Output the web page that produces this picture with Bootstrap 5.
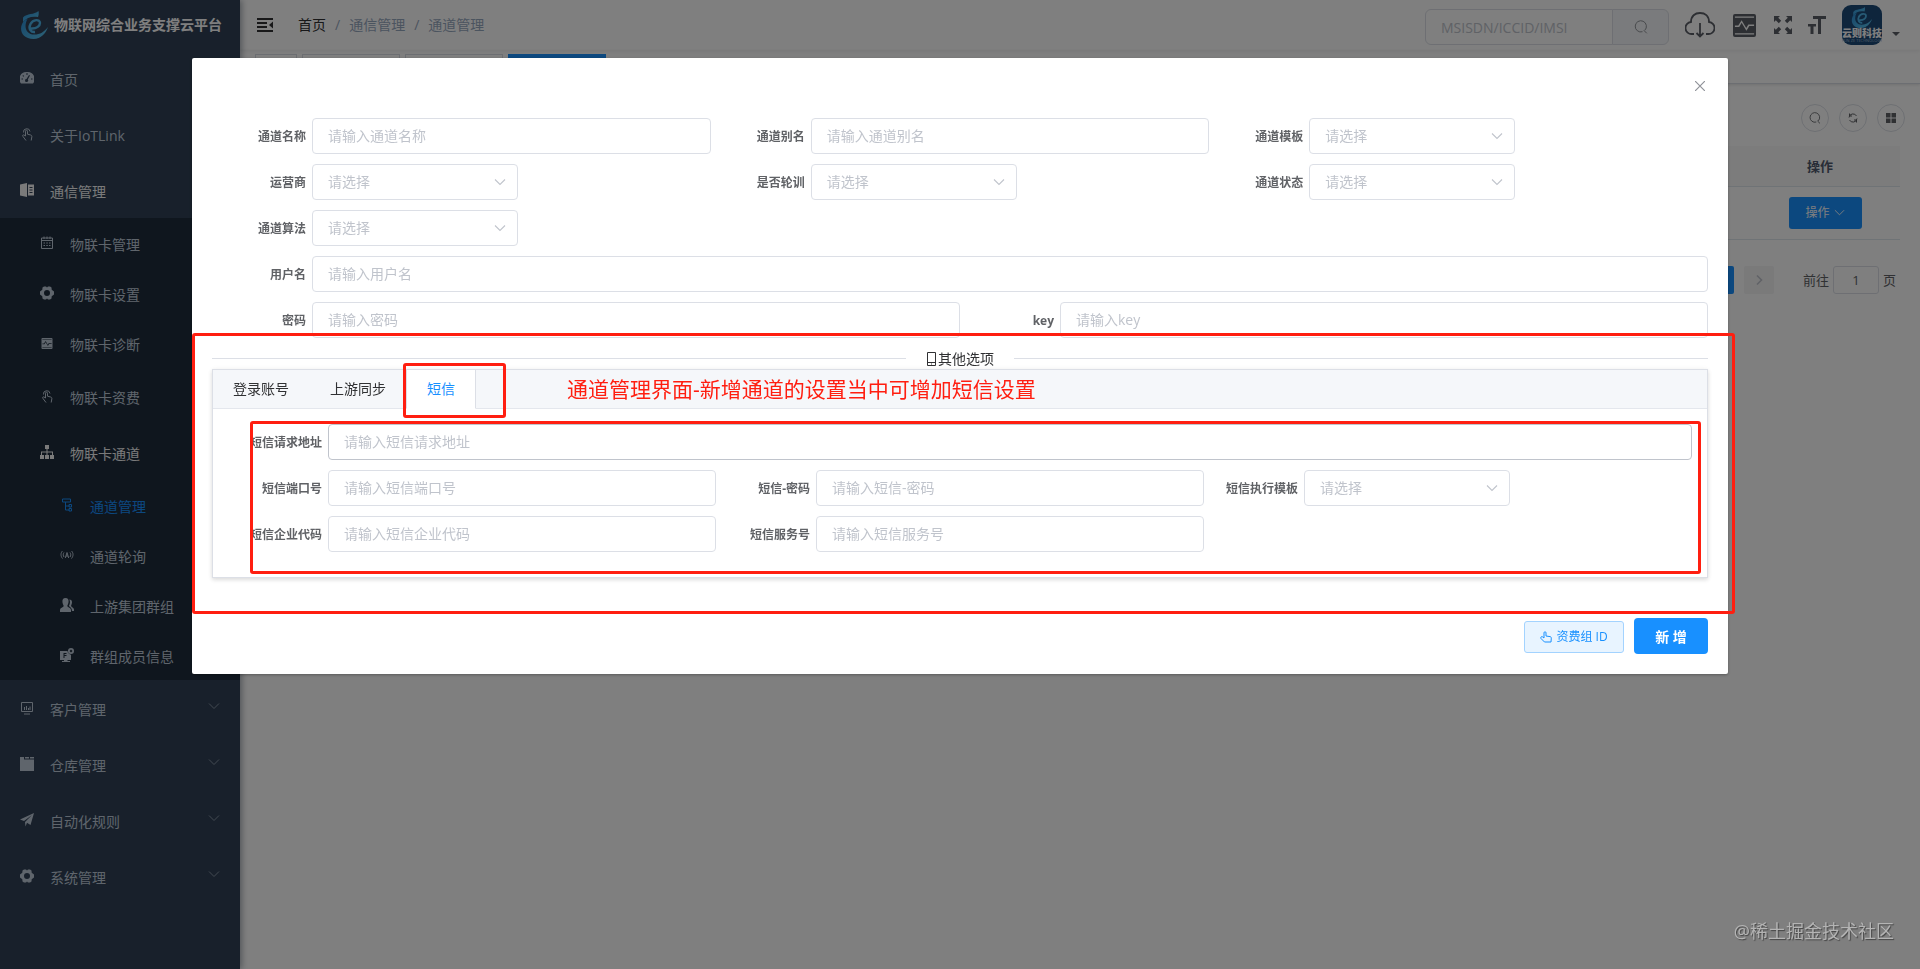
<!DOCTYPE html>
<html lang="zh-CN">
<head>
<meta charset="utf-8">
<meta name="viewport" content="width=device-width, initial-scale=1">
<title>物联网综合业务支撑云平台</title>
<link href="https://cdn.jsdelivr.net/npm/bootstrap@5.3.0/dist/css/bootstrap.min.css" rel="stylesheet">
<style>
:root { --blue: #1890ff; --line: #dcdfe6; --note: #ff1e10; }
body { font-family: "Open Sans", "Noto Sans CJK SC", sans-serif; font-size: 14px; line-height: 20px; color: #303133; background: #fff; }
svg { display: block; fill: none; stroke: currentColor; flex: none; }
svg.solid { fill: currentColor; stroke: none; }
a { color: inherit; text-decoration: none; }

/* side bar */
.side { width: 240px; background: #304156; color: #bfcbd9; box-shadow: 2px 0 6px rgba(0,21,41,.35); z-index: 2; }
.brand { height: 50px; padding-left: 20px; gap: 6px; color: #fff; font-weight: 700; }
.menu a { display: flex; align-items: center; height: 50px; gap: 16px; padding: 0 20px; }
.menu .tall { height: 56px; }
.menu span { padding-top: 3px; }
.menu .sub { background: #1f2d3d; }
.menu .sub a { padding-left: 40px; }
.menu .sub .deep { padding-left: 60px; }
.menu .opened { color: #f4f4f5; }
.menu .current { color: var(--blue); }
.menu .arrow { margin-left: auto; margin-bottom: 4px; opacity: .6; }

/* top bar */
.topbar { height: 50px; box-shadow: 0 1px 4px rgba(0,21,41,.08); padding: 0 18px 0 17px; }
.topbar .tools { color: #5a5e66; }
.crumbs { --bs-breadcrumb-item-padding-x: 9px; --bs-breadcrumb-divider-color: #97a8be; margin-left: 25px; }
.crumbs a { color: #97a8be; }
.crumbs a.home { color: #303133; }
.search { width: 244px; height: 36px; margin-top: 4px; }
.search .form-control { font-size: 14px; padding: 0 15px; border-color: var(--line); }
.search .form-control::placeholder { color: #c0c4cc; opacity: 1; }
.search .btn { width: 57px; border-color: var(--line); background: #f5f7fa; color: #909399; display: flex; align-items: center; justify-content: center; }
.tool { border: 0; background: none; padding: 0; color: inherit; }
.gap-tool { margin-left: 18px; }
.tags { height: 34px; padding: 4px 15px; gap: 5px; border-bottom: 1px solid #d8dce5; box-shadow: 0 1px 3px rgba(0,0,0,.12); }
.tags a { height: 26px; width: 98px; border: 1px solid #d8dce5; font-size: 12px; line-height: 24px; text-align: center; color: #495060; }
.tags a.short { width: 42px; }
.tags a.on { background: var(--blue); border-color: var(--blue); color: #fff; }

/* list behind the dialog */
.list-area { padding: 20px 20px; }
.list-tools { gap: 10px; margin: 0 -5px 14px 0; }
.round { width: 28px; height: 28px; border-radius: 50%; border: 1px solid var(--line); background: #fff; color: #606266; display: flex; align-items: center; justify-content: center; padding: 0; }
.grid-table th { background: #f8f8f9; height: 40px; font-size: 13px; color: #515a6e; padding: 0; border-bottom: 1px solid #dfe6ec; vertical-align: middle; }
.grid-table td { height: 53px; padding: 0; border-bottom: 1px solid #dfe6ec; vertical-align: middle; }
.grid-table .ops { width: 160px; text-align: center; }
.op-btn { width: 73px; height: 32px; background: var(--blue); color: #fff; font-size: 12px; border-radius: 3px; padding: 0; margin-left: 10px; }
.pager { height: 28px; margin-top: 26px; font-size: 13px; color: #606266; }
.pager button { width: 30px; height: 28px; border: 0; border-radius: 2px; background: #f4f4f5; color: #c0c4cc; }
.pager button.on { background: var(--blue); color: #fff; margin-right: 10px; }
.pager label { margin: 0 4px 0 29px; }
.pager input { width: 46px; height: 28px; border: 1px solid var(--line); border-radius: 3px; text-align: center; color: #606266; padding: 0; }

/* dialog */
.modal-dialog { max-width: 80%; margin: 6vh auto 50px; }
.modal-content { border: 0; border-radius: 2px; box-shadow: 0 1px 3px rgba(0,0,0,.3); }
.head { padding: 23px 23px 0; height: 36px; }
.head button { border: 0; background: none; padding: 0; color: #909399; height: 10px; }
.main-form { padding: 24px 20px 0; }
.field { display: flex; margin-bottom: 10px; }
.field label { width: 100px; height: 36px; flex: none; padding-right: 6px; text-align: right; font-size: 12px; font-weight: 700; line-height: 38px; color: #606266; white-space: nowrap; }
.field .form-control, .field .form-select { height: 36px; font-size: 14px; line-height: 20px; padding: 0 15px; border: 1px solid var(--line); border-radius: 4px; color: #606266; }
.field .form-control { padding-bottom: 2px; }
.field .form-control::placeholder { color: #c0c4cc; opacity: 1; }
.field .form-select { width: 206px; color: #c0c4cc; background-position: right 11px center; background-size: 12px 12px; background-image: url("data:image/svg+xml,%3Csvg xmlns='http://www.w3.org/2000/svg' viewBox='0 0 12 12'%3E%3Cpath d='M1 3.5l5 5 5-5' fill='none' stroke='%23c0c4cc' stroke-width='1.1'/%3E%3C/svg%3E"); }
.field .hovered { border-color: #c0c4cc; }
.rule { height: 21px; color: #303133; }
.rule::before, .rule::after { content: ""; flex: 1; height: 1px; background: var(--line); }
.rule span { display: flex; align-items: center; padding: 0 20px; }
.tab-box { border: 1px solid var(--line); box-shadow: 0 2px 4px rgba(0,0,0,.12), 0 0 6px rgba(0,0,0,.04); }
.tab-head { background: #f5f7fa; border: 0; border-bottom: 1px solid #e4e7ed; height: 39px; }
.tab-head .nav-item { margin: -1px -1px 0 0; }
.tab-head .nav-item:first-child { margin-left: -1px; }
.tab-head .nav-link { height: 40px; padding: 0 20px; line-height: 38px; border: 1px solid transparent; border-radius: 0; margin: 0; color: #303133; }
.tab-head .nav-link.active { color: var(--blue); background: #fff; border-color: var(--line); border-bottom-color: #fff; }
.tab-body { padding: 15px; }
.foot { padding: 40px 20px 20px; gap: 10px; }
.btn-plain { width: 100px; height: 32px; font-size: 12px; padding: 0; color: var(--blue); background: #e8f4ff; border: 1px solid #a3d3ff; border-radius: 3px; margin-top: 2px; }
.btn-add { width: 74px; height: 36px; font-size: 14px; font-weight: 700; padding: 0; color: #fff; background: var(--blue); border-radius: 4px; }

/* red marks laid over the form */
.note { position: absolute; border: 3px solid var(--note); border-radius: 3px; pointer-events: none; z-index: 3; }
.note-section { inset: -15px -27px -36px -20px; }
.note-tab { inset: -6px -30px -10px -3px; }
.note-fields { inset: 12px 6px 3px 37px; }
.note-text { font-size: 21px; line-height: 38px; color: var(--note); margin-left: 92px; white-space: nowrap; }
.watermark { position: fixed; right: 26px; bottom: 26px; font-size: 18px; line-height: 24px; color: #b4b4b4; text-shadow: 1px 1px 1px #444; z-index: 2000; }
</style>
</head>
<body class="overflow-hidden">

<svg width="0" height="0" class="position-absolute" aria-hidden="true">
  <defs>
    <linearGradient id="wave" x1="0" y1="0" x2="1" y2="1"><stop offset="0" stop-color="#2b8fd8"/><stop offset="1" stop-color="#5cc6ee"/></linearGradient>
    <symbol id="logo" viewBox="0 0 28 28"><g fill="#3fa6e2" stroke="none"><path fill="url(#wave)" d="M3 6.500C7 2 14 4 18.500 0c.5 2 .3 4-.5 6C12 5 7 6 3 11z"/><path fill="url(#wave)" d="M5 9c-7 6-5 19 8.500 19C21 28 26 22 28 16c-4 5-8 7.500-13.500 7.500C5.500 23.500 3.500 15 7.500 8z"/></g><path fill="none" stroke="#4db4ea" stroke-width="2.400" d="M11 17.500c6 .5 9-3 9-5.500 0-4-7-4-9.500 1-2.500 5 .5 8.500 4.500 8"/></symbol>
    <symbol id="down" viewBox="0 0 12 12"><path fill="none" d="M1 3.500l5 5 5-5"/></symbol>
    <symbol id="lens" viewBox="0 0 14 14"><path fill="none" d="M8.500 11.700A5.600 5.600 0 1 1 10.800 10.300M9.800 10.300l3 3"/></symbol>
    <symbol id="gear" viewBox="0 0 14 14"><path fill-rule="evenodd" stroke="none" fill="currentColor" d="M4 .5h2l1 1 1-1h2l1.500 1 .2 2.300L14 5.500v3l-2.300 1.700-.2 2.300-1.500 1H8l-1-1-1 1H4l-1.500-1-.2-2.300L0 8.500v-3l2.300-1.700.2-2.300zM7 4a3 3 0 1 0 0 6 3 3 0 0 0 0-6z"/></symbol>
    <symbol id="touch" viewBox="0 0 14 14"><path fill="none" d="M3.500 5.500a3.200 3.200 0 1 1 6.500-1M5.500 9V4.200c0-1.400 2-1.400 2 0v3l3.200.8c1 .3 1.300 1 1.100 2l-.6 3.500M5.500 9L4 8C3 7.500 2 8.500 3 9.500l3 4"/></symbol>
    <symbol id="pulse" viewBox="0 0 24 24"><path fill="currentColor" stroke="none" fill-rule="evenodd" d="M2 0h20v24H2a2 2 0 0 1-2-2V2a2 2 0 0 1 2-2zm20 0a2 2 0 0 1 2 2v20a2 2 0 0 1-2 2zM2 2.500v1.500h20V2.500zM2 20v1.500h20V20zM2 12v1.500h4.500L9 9l5 8.500 3-5h5V11h-6l-2.200 3.500L9 6.500 5.500 12z"/></symbol>
  </defs>
</svg>

<div class="d-flex min-vh-100">
  <aside class="side flex-shrink-0 position-relative">
    <a href="#" class="brand d-flex align-items-center"><svg width="28" height="28"><use href="#logo"/></svg>物联网综合业务支撑云平台</a>
    <nav class="menu">
      <a href="#" class="tall"><svg class="solid" width="14" height="14" viewBox="0 0 14 14"><path fill-rule="evenodd" d="M7 1a7 7 0 0 1 6 11.500H1A7 7 0 0 1 7 1zM6.500 2v2h1V2zM3 4l-.5 1 1 .8.7-.8zM1.500 7.500v1h1.500v-1zm9.500 0v1h1.500v-1zM9 4L6.500 8a1.500 1.500 0 1 0 1.300.6L10 4.600z"/></svg><span>首页</span></a>
      <a href="#" class="tall"><svg width="14" height="14"><use href="#touch"/></svg><span>关于IoTLink</span></a>
      <a href="#" class="tall opened"><svg class="solid" width="14" height="14" viewBox="0 0 14 14"><path fill-rule="evenodd" d="M0 1.500L7 0v14l-7-1.500zM8 1.500h6v11H8zM9.500 4v1h3V4zm0 2.500v1h3v-1zm0 2.500v1h3V9z"/></svg><span>通信管理</span></a>
      <div class="sub">
        <a href="#"><svg width="14" height="14" viewBox="0 0 14 14"><path d="M1.500 2h11v10.500h-11zM1.500 4.500h11M4 .5V3M7 .5V3M10 .5V3M3.500 7h1.500M6.300 7h1.500M9 7h1.500M3.500 9.500h1.500M6.300 9.500h1.500M9 9.500h1.500"/></svg><span>物联卡管理</span></a>
        <a href="#"><svg width="14" height="14"><use href="#gear"/></svg><span>物联卡设置</span></a>
        <a href="#"><svg width="14" height="11"><use href="#pulse"/></svg><span>物联卡诊断</span></a>
        <a href="#" class="tall"><svg width="14" height="14"><use href="#touch"/></svg><span>物联卡资费</span></a>
        <a href="#" class="tall opened"><svg class="solid" width="14" height="14" viewBox="0 0 14 14"><path d="M5 0h4v4H7.500v2.500H13V10h1v4h-4v-4h2V7.500H7.500V10H9v4H5v-4h1.500V7.500H2V10h2v4H0v-4h1V6.500h5.500V4H5z"/></svg><span>物联卡通道</span></a>
        <a href="#" class="deep current"><svg width="14" height="14" viewBox="0 0 14 14"><path d="M2.500 1h8v3h-8zM5.500 4v8h4M5.500 8h4M9 6.500h2.500v2.500H9zM9 10.500h2.500V13H9z"/></svg><span>通道管理</span></a>
        <a href="#" class="deep"><svg width="14" height="14" viewBox="0 0 14 14"><path d="M2.500 3C.5 5 .5 8 2.500 10.500M4 4.500c-1 1.300-1 3.200 0 4.500M11.500 3c2 2 2 5 0 7.500M10 4.500c1 1.300 1 3.200 0 4.500M5.300 10L7 4.500 8.700 10M6 8h2"/></svg><span>通道轮询</span></a>
        <a href="#" class="deep"><svg class="solid" width="14" height="14" viewBox="0 0 14 14"><path d="M5.500 0C8 0 9 2 8.500 4.500 8.200 6 7.500 7 7.300 8c.5 1.500 3.500 1.500 3.700 4v2H0v-2c.2-2.500 3.200-2.500 3.700-4-.2-1-1-2-1.200-3.500C2 2 3 0 5.500 0zm3.800 1.500c3 0 3.200 3 2.200 5l-.5 1.500c.5 1.300 2.800 1.500 3 3.500v1.500h-2C12 10 10 9 8.800 8 10 6 10.500 3.500 9.300 1.500z"/></svg><span>上游集团群组</span></a>
        <a href="#" class="deep"><svg class="solid" width="14" height="14" viewBox="0 0 14 14"><path fill-rule="evenodd" d="M0 3h7.500c.3 2.200 1.800 3.500 3.500 3.700V12H7.500v1H10v1H2v-1h2v-1H0zm3.500 2v5h1V8h2V7h-2V6h2V5zM11 0a3 3 0 1 1 0 6 3 3 0 0 1 0-6zm0 1.500L9.500 3l1.500 1.500L12.500 3z"/></svg><span>群组成员信息</span></a>
      </div>
      <a href="#" class="tall"><svg width="14" height="14" viewBox="0 0 14 14"><path d="M1.500 1.500h11v9h-11zM4 13h6M4.500 9V6M6.500 9V5M8.500 9V7M10 9V5.500"/></svg><span>客户管理</span><svg class="arrow" width="12" height="12"><use href="#down"/></svg></a>
      <a href="#" class="tall"><svg class="solid" width="14" height="14" viewBox="0 0 14 14"><path d="M0 0h4v2.500h10V14H0zM5 0h4v1.500H5zM10 0h4v1.500h-4z"/></svg><span>仓库管理</span><svg class="arrow" width="12" height="12"><use href="#down"/></svg></a>
      <a href="#" class="tall"><svg class="solid" width="14" height="14" viewBox="0 0 14 14"><path d="M14 0l-3.500 12L7 9.800 5.500 13.500 5 9l7-7-8 6-4-1.500z"/></svg><span>自动化规则</span><svg class="arrow" width="12" height="12"><use href="#down"/></svg></a>
      <a href="#" class="tall"><svg width="14" height="14"><use href="#gear"/></svg><span>系统管理</span><svg class="arrow" width="12" height="12"><use href="#down"/></svg></a>
    </nav>
  </aside>

  <div class="flex-grow-1">
    <header class="topbar d-flex align-items-center">
      <button class="tool" aria-label="折叠菜单"><svg width="16" height="14" viewBox="0 0 16 14" stroke-width="2"><path d="M0 1h16M0 5h10M0 9h10M0 13h16"/><path fill="currentColor" stroke="none" d="M16 3.500v7L12 7z"/></svg></button>
      <nav aria-label="breadcrumb"><ol class="breadcrumb crumbs mb-0">
        <li class="breadcrumb-item"><a href="#" class="home">首页</a></li>
        <li class="breadcrumb-item"><a href="#">通信管理</a></li>
        <li class="breadcrumb-item"><a href="#">通道管理</a></li>
      </ol></nav>
      <div class="tools d-flex align-items-center ms-auto">
        <div class="input-group search">
          <input class="form-control" type="text" placeholder="MSISDN/ICCID/IMSI" aria-label="MSISDN/ICCID/IMSI">
          <button class="btn" aria-label="搜索"><svg width="14" height="14"><use href="#lens"/></svg></button>
        </div>
        <div class="d-flex align-items-center">
          <button class="tool ms-3" aria-label="下载"><svg width="30" height="26" viewBox="0 0 30 26" stroke="#222" stroke-width="1.800"><path d="M9 22H7a6 6 0 0 1-1-12C6 4 10 1 15 1s9 3 9 9a6 6 0 0 1-1 12h-2M15 11v13M11.500 21l3.500 3.500 3.500-3.500"/></svg></button>
          <button class="tool gap-tool" aria-label="监控"><svg width="23" height="23"><use href="#pulse"/></svg></button>
          <button class="tool gap-tool" aria-label="全屏"><svg class="solid" width="18" height="18" viewBox="0 0 18 18"><path d="M0 0h6L4.200 1.800l3 3-2.400 2.400-3-3L0 6zM18 0v6l-1.800-1.800-3 3-2.400-2.400 3-3L12 0zM0 18v-6l1.800 1.800 3-3 2.400 2.400-3 3L6 18zM18 18h-6l1.800-1.800-3-3 2.400-2.400 3 3L18 12z"/></svg></button>
          <button class="tool ms-3" aria-label="字号"><svg class="solid" width="18" height="18" viewBox="0 0 18 18"><path d="M5 0h13v3h-5v15h-3V3H5zM0 8h8v2.500H5.500V18h-3v-7.500H0z"/></svg></button>
          <a href="#" class="d-flex align-items-end ms-3" aria-label="账户"><svg width="40" height="40" viewBox="0 0 40 40"><rect width="40" height="40" rx="9" fill="#1c4a78" stroke="none"/><svg x="9" y="2" width="21" height="21"><use href="#logo"/></svg><text x="20" y="32" text-anchor="middle" font-size="10" font-weight="900" fill="#fff" stroke="none">云则科技</text><text x="20" y="37" text-anchor="middle" font-size="4" fill="#9db8d2" stroke="none">YUN ZE TECHNOLOGY</text></svg><svg class="solid ms-2 mb-2" width="12" height="5" viewBox="0 0 12 5"><path d="M2 0h8L6 4z"/></svg></a>
        </div>
      </div>
    </header>
    <nav class="tags d-flex">
      <a href="#" class="short">首页</a><a href="#">物联卡管理</a><a href="#">物联卡设置</a><a href="#" class="on">通道管理</a>
    </nav>
    <main class="list-area">
      <div class="list-tools d-flex justify-content-end">
        <button class="round" aria-label="搜索"><svg width="12" height="12"><use href="#lens"/></svg></button>
        <button class="round" aria-label="刷新"><svg width="10" height="10" viewBox="0 0 10 10"><path d="M1 4.500A4 4 0 0 1 8.500 3M9 5.500A4 4 0 0 1 1.500 7M1.500.5V3H4M8.500 9.500V7H6"/></svg></button>
        <button class="round" aria-label="列"><svg class="solid" width="10" height="10" viewBox="0 0 10 10"><path d="M0 0h4.500v4.500H0zM5.500 0H10v4.500H5.500zM0 5.500h4.500V10H0zM5.500 5.500H10V10H5.500z"/></svg></button>
      </div>
      <table class="table grid-table mb-0">
        <thead><tr><th></th><th class="ops">操作</th></tr></thead>
        <tbody><tr><td></td><td class="ops"><button class="btn op-btn d-inline-flex align-items-center justify-content-center gap-1">操作<svg width="11" height="11"><use href="#down"/></svg></button></td></tr></tbody>
      </table>
      <div class="pager d-flex justify-content-end align-items-center me-1">
        <button class="on">1</button>
        <button aria-label="下一页"><svg class="m-auto" width="10" height="12" viewBox="0 0 10 12" stroke-width="1.600"><path d="M3 1.500L7.500 6 3 10.500"/></svg></button>
        <label for="goto">前往</label><input id="goto" type="text" value="1"><span class="ms-1">页</span>
      </div>
    </main>
  </div>
</div>

<div class="modal-backdrop show"></div>
<div class="modal d-block" tabindex="-1" role="dialog" aria-label="新增通道">
  <div class="modal-dialog">
    <form class="modal-content">
      <div class="head d-flex justify-content-end"><button type="button" aria-label="关闭"><svg width="10" height="10" viewBox="0 0 10 10" stroke-width="1.200"><path d="M0 0l10 10M10 0L0 10"/></svg></button></div>
      <div class="main-form">
        <div class="row g-0">
          <div class="col-4 field"><label for="f1">通道名称</label><input id="f1" class="form-control" placeholder="请输入通道名称"></div>
          <div class="col-4 field"><label for="f2">通道别名</label><input id="f2" class="form-control" placeholder="请输入通道别名"></div>
          <div class="col-4 field"><label for="f3">通道模板</label><select id="f3" class="form-select"><option>请选择</option></select></div>
          <div class="col-4 field"><label for="f4">运营商</label><select id="f4" class="form-select"><option>请选择</option></select></div>
          <div class="col-4 field"><label for="f5">是否轮训</label><select id="f5" class="form-select"><option>请选择</option></select></div>
          <div class="col-4 field"><label for="f6">通道状态</label><select id="f6" class="form-select"><option>请选择</option></select></div>
          <div class="col-12 field"><label for="f7">通道算法</label><select id="f7" class="form-select"><option>请选择</option></select></div>
          <div class="col-12 field"><label for="f8">用户名</label><input id="f8" class="form-control" placeholder="请输入用户名"></div>
          <div class="col-6 field"><label for="f9">密码</label><input id="f9" class="form-control" placeholder="请输入密码"></div>
          <div class="col-6 field"><label for="f10">key</label><input id="f10" class="form-control" placeholder="请输入key"></div>
        </div>
        <section class="position-relative">
          <div class="rule d-flex align-items-center"><span><svg width="12" height="14" viewBox="0 0 12 14"><path d="M1.500.5h8v13h-8zM1.500 10.500h8M5 12h1"/></svg>其他选项</span></div>
          <div class="tab-box">
            <ul class="nav nav-tabs tab-head flex-nowrap">
              <li class="nav-item"><a class="nav-link" href="#">登录账号</a></li>
              <li class="nav-item"><a class="nav-link" href="#">上游同步</a></li>
              <li class="nav-item position-relative"><a class="nav-link active" href="#">短信</a><div class="note note-tab"></div></li>
              <li class="note-text">通道管理界面-新增通道的设置当中可增加短信设置</li>
            </ul>
            <div class="tab-body position-relative">
              <div class="row g-0">
                <div class="col-12 field"><label for="s1">短信请求地址</label><input id="s1" class="form-control hovered" placeholder="请输入短信请求地址"></div>
                <div class="col-4 field"><label for="s2">短信端口号</label><input id="s2" class="form-control" placeholder="请输入短信端口号"></div>
                <div class="col-4 field"><label for="s3">短信-密码</label><input id="s3" class="form-control" placeholder="请输入短信-密码"></div>
                <div class="col-4 field"><label for="s4">短信执行模板</label><select id="s4" class="form-select"><option>请选择</option></select></div>
                <div class="col-4 field"><label for="s5">短信企业代码</label><input id="s5" class="form-control" placeholder="请输入短信企业代码"></div>
                <div class="col-4 field"><label for="s6">短信服务号</label><input id="s6" class="form-control" placeholder="请输入短信服务号"></div>
              </div>
              <div class="note note-fields"></div>
            </div>
          </div>
          <div class="note note-section"></div>
        </section>
      </div>
      <div class="foot d-flex justify-content-end align-items-center">
        <button type="button" class="btn btn-plain d-flex align-items-center justify-content-center gap-1"><svg width="12" height="12" viewBox="0 0 12 12"><path d="M4 7V1.800c0-1.400 2-1.400 2 0V5l4 .6c1 .2 1.400.8 1.300 1.600L11 11H4.500L1 7.500C.3 6.500 1.500 5 2.500 5.800z"/></svg>资费组 ID</button>
        <button type="button" class="btn btn-add">新 增</button>
      </div>
    </form>
  </div>
</div>
<div class="watermark">@稀土掘金技术社区</div>
<script src="https://cdn.jsdelivr.net/npm/bootstrap@5.3.0/dist/js/bootstrap.bundle.min.js"></script>
</body>
</html>
